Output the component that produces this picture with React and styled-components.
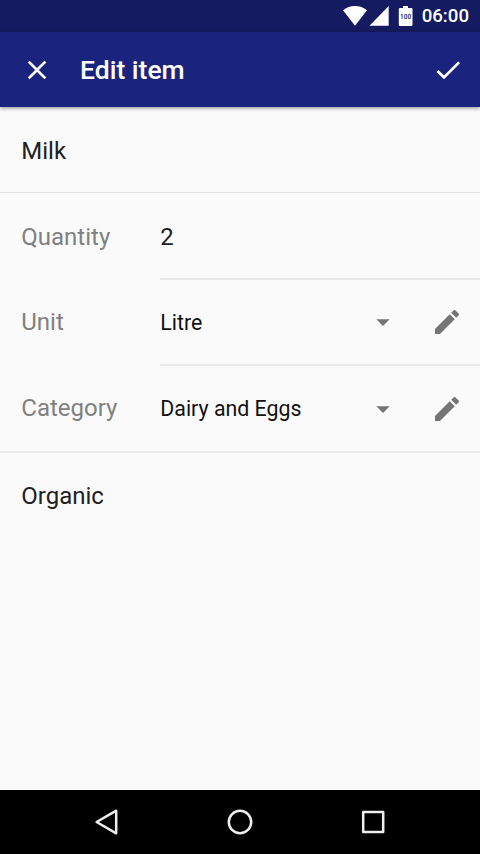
import React, { useState } from "react";
import styled, { createGlobalStyle } from "styled-components";

const CloseIcon = () => (
    <svg width="32" height="32" viewBox="0 0 24 24" fill="currentColor">
        <path d="M19 6.41L17.59 5 12 10.59 6.41 5 5 6.41 10.59 12 5 17.59 6.41 19 12 13.41 17.59 19 19 17.59 13.41 12z" />
    </svg>
);

const CheckIcon = () => (
    <svg width="32" height="32" viewBox="0 0 24 24" fill="currentColor">
        <path d="M9 16.17L4.83 12l-1.42 1.41L9 19 21 7l-1.41-1.41z" />
    </svg>
);

const EditIcon = () => (
    <svg width="32" height="32" viewBox="0 0 24 24" fill="currentColor">
        <path d="M3 17.25V21h3.75L17.81 9.94l-3.75-3.75L3 17.25zM20.71 7.04c.39-.39.39-1.02 0-1.41l-2.34-2.34c-.39-.39-1.02-.39-1.41 0l-1.83 1.83 3.75 3.75 1.83-1.83z" />
    </svg>
);

const DropdownIcon = () => (
    <svg width="32" height="32" viewBox="0 0 24 24" fill="#757575">
        <path d="M7 10l5 5 5-5z" />
    </svg>
);

const StatusIcons = () => (
    <svg width="70" height="20" viewBox="0 0 70 20" fill="#fff">
        <path d="M0 4.2C3.4 1.6 7.5 0 12 0s8.6 1.6 12 4.2L12 19.7z" />
        <path d="M45.7 0V19.7H26.5z" />
        <path d="M60 0h5v2h3.2q1.3 0 1.3 1.3v15.4q0 1.3-1.3 1.3h-11.1q-1.3 0-1.3-1.3V3.3q0-1.3 1.3-1.3h2.9z" />
        <text x="62.6" y="12.6" textAnchor="middle" fontSize="6.5" fontWeight="500" fill="#151b60">
            100
        </text>
    </svg>
);

const fields = [
    { label: "Quantity", value: "2" },
    { label: "Unit", value: "Litre", select: true },
    { label: "Category", value: "Dairy and Eggs", select: true },
];

const App = () => {
    const [name, setName] = useState("Milk");
    const [note, setNote] = useState("Organic");
    const [quantity, setQuantity] = useState(fields[0].value);

    return (
        <Screen>
            <GlobalStyle />
            <StatusBar>
                <StatusIcons />
                <Clock>06:00</Clock>
            </StatusBar>
            <AppBar>
                <IconButton aria-label="Close">
                    <CloseIcon />
                </IconButton>
                <Title>Edit item</Title>
                <IconButton aria-label="Save">
                    <CheckIcon />
                </IconButton>
            </AppBar>
            <Form>
                <TextRow $divider>
                    <Input value={name} onChange={(e) => setName(e.target.value)} />
                </TextRow>
                <FieldGroup>
                    {fields.map((field) => (
                        <Field key={field.label}>
                            <Label $raised={field.select}>{field.label}</Label>
                            <Value $text={!field.select}>
                                {field.select ? (
                                    <>
                                        <Select>
                                            <span>{field.value}</span>
                                            <DropdownIcon />
                                        </Select>
                                        <IconButton $muted aria-label={`Edit ${field.label}`}>
                                            <EditIcon />
                                        </IconButton>
                                    </>
                                ) : (
                                    <Input value={quantity} onChange={(e) => setQuantity(e.target.value)} />
                                )}
                            </Value>
                        </Field>
                    ))}
                </FieldGroup>
                <TextRow>
                    <Input value={note} onChange={(e) => setNote(e.target.value)} />
                </TextRow>
            </Form>
            <NavBar>
                <svg width="28" height="28" viewBox="0 0 28 28">
                    <path d="M23.2 2.7v22.6L3.6 14z" />
                </svg>
                <svg width="28" height="28" viewBox="0 0 28 28">
                    <circle cx="14" cy="14" r="11.2" />
                </svg>
                <svg width="28" height="28" viewBox="0 0 28 28">
                    <rect x="4.2" y="4" width="20" height="20" />
                </svg>
            </NavBar>
        </Screen>
    );
};

const GlobalStyle = createGlobalStyle`
  * {
    box-sizing: border-box;
  }
  body {
    margin: 0;
    font-family: Roboto, sans-serif;
  }
  svg {
    display: block;
    flex-shrink: 0;
  }
`;

const Screen = styled.div`
  display: flex;
  flex-direction: column;
  width: 480px;
  height: 854px;
  overflow: hidden;
  background-color: #fafafa;
`;

const StatusBar = styled.div`
  display: flex;
  align-items: center;
  justify-content: flex-end;
  gap: 9px;
  height: 32px;
  padding-right: 11px;
  background-color: #151b60;
`;

const Clock = styled.span`
  color: #fff;
  font-size: 18.67px;
  font-weight: 500;
  line-height: 32px;
`;

const AppBar = styled.header`
  display: flex;
  align-items: center;
  height: 75px;
  padding: 0 16px 0 21.3px;
  background-color: #1a237e;
  color: #fff;
  box-shadow: 0 1px 4px rgba(0, 0, 0, 0.45);
`;

const IconButton = styled.button`
  display: flex;
  padding: 0;
  border: 0;
  background: none;
  color: ${({ $muted }) => ($muted ? "#757575" : "inherit")};
  cursor: pointer;
`;

const Title = styled.h1`
  flex: 1;
  margin: 0 0 0 26.7px;
  font-size: 26.5px;
  font-weight: 500;
`;

const Form = styled.main`
  flex: 1;
`;

const TextRow = styled.div`
  display: flex;
  align-items: center;
  height: 86px;
  padding: ${({ $divider }) => ($divider ? "3px 21.3px 0" : "0 21.3px")};
  border-bottom: ${({ $divider }) => ($divider ? "1px solid #e2e2e2" : "0")};
`;

const Input = styled.input`
  width: 100%;
  padding: 0;
  border: 0;
  outline: none;
  background: none;
  color: #212121;
  font-family: inherit;
  font-size: 24px;
`;

const FieldGroup = styled.section`
  border-bottom: 2px solid #e9e9e9;
`;

const Label = styled.label`
  width: 139px;
  padding-bottom: ${({ $raised }) => ($raised ? "2px" : "0")};
  color: #808080;
  font-size: 24px;
`;

const Value = styled.div`
  display: flex;
  flex: 1;
  align-items: center;
  height: 100%;
  padding: ${({ $text }) => ($text ? "3px" : "0")} 17px 0 0;
  border-bottom: 2px solid #e9e9e9;
`;

const Field = styled.div`
  display: flex;
  align-items: center;
  height: 86px;
  padding-left: 21.3px;
  &:first-child {
    height: 87px;
  }
  &:last-child {
    height: 85px;
  }
  &:last-child ${Value} {
    border-bottom: 0;
  }
`;

const Select = styled.div`
  display: flex;
  flex: 1;
  align-items: center;
  justify-content: space-between;
  margin-right: 32px;
  color: #111;
  font-size: 21.33px;
`;

const NavBar = styled.nav`
  display: flex;
  align-items: center;
  justify-content: center;
  gap: 105px;
  height: 64px;
  background-color: #000;
  svg {
    fill: none;
    stroke: #eee;
    stroke-width: 2.5;
    stroke-linejoin: round;
  }
`;

export default App;
